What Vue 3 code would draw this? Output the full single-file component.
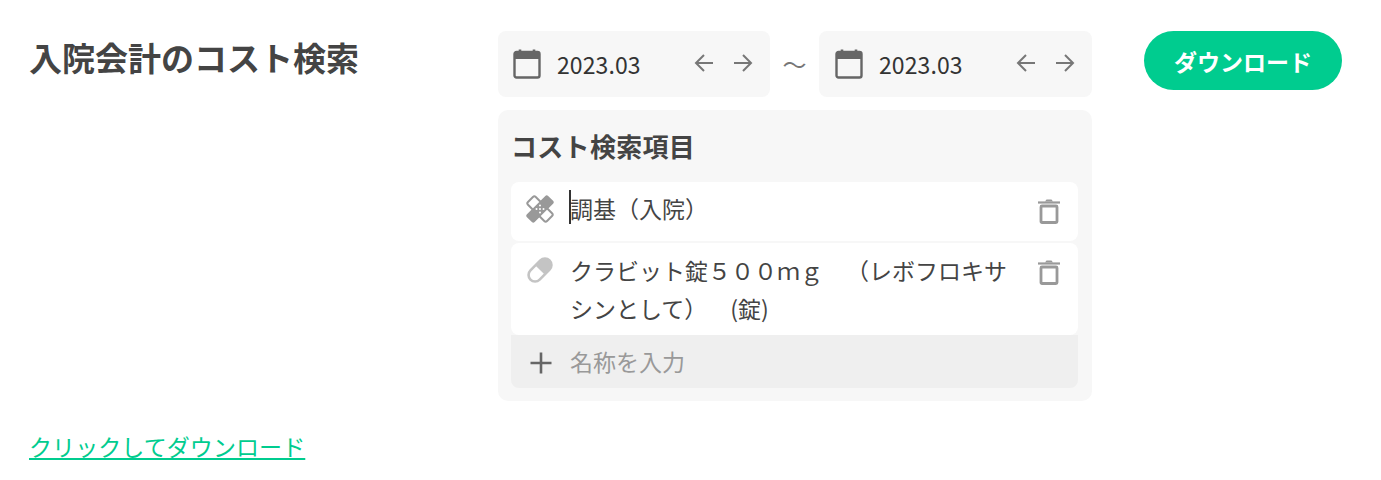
<template>
  <div class="page">
    <div class="top">
      <h1 class="title">入院会計のコスト検索</h1>
      <div class="center">
        <div class="dates">
          <div class="date" v-for="(d, i) in dates" :key="i">
            <svg class="cal" viewBox="0 0 28 32" width="28" height="32">
              <path d="M7 1.500v4M21 1.500v4" stroke="#666" stroke-width="2.600" fill="none" />
              <rect x="1.500" y="4" width="25" height="25.500" rx="2" fill="none" stroke="#666" stroke-width="2.400" />
              <rect x="1.500" y="4" width="25" height="7" fill="#666" />
            </svg>
            <span class="date-text">{{ d }}</span>
            <svg class="arrow" viewBox="0 0 20 20" width="20" height="20">
              <path d="M19 10H2M10 2 2 10l8 8" stroke="#777" stroke-width="2" fill="none" />
            </svg>
            <svg class="arrow" viewBox="0 0 20 20" width="20" height="20">
              <path d="M1 10H18M10 2 18 10l-8 8" stroke="#777" stroke-width="2" fill="none" />
            </svg>
          </div>
          <span class="tilde">～</span>
        </div>
        <div class="panel">
          <h2 class="panel-title">コスト検索項目</h2>
          <div class="row first">
            <svg class="row-icon" viewBox="0 0 28 28" width="28" height="28">
              <g transform="rotate(45 14 14)">
                <rect x="0.500" y="8.500" width="27" height="11" rx="2" fill="#fff" stroke="#999" stroke-width="2" />
              </g>
              <g transform="rotate(-45 14 14)">
                <rect x="-1" y="8.500" width="30" height="11" rx="2" fill="#999" />
              </g>
              <circle cx="14" cy="10.500" r="1" fill="#fff" />
              <circle cx="17.500" cy="14" r="1" fill="#fff" />
              <circle cx="14" cy="17.500" r="1" fill="#fff" />
              <circle cx="10.500" cy="14" r="1" fill="#fff" />
              <circle cx="14" cy="14" r="1" fill="#fff" />
            </svg>
            <div class="row-text"><span class="caret"></span>調基（入院）</div>
            <svg class="trash" viewBox="0 0 22 26" width="22" height="26">
              <path d="M0 4.500h22" stroke="#999" stroke-width="2.200" />
              <path d="M7 3.500 8.500 1.500h5L15 3.500z" fill="#999" />
              <rect x="3" y="8" width="16" height="16.500" rx="1" fill="none" stroke="#999" stroke-width="2.800" />
            </svg>
          </div>
          <div class="row">
            <svg class="row-icon" viewBox="0 0 28 28" width="28" height="28">
              <g transform="rotate(-45 14 14)">
                <rect x="0.500" y="7.500" width="27" height="13" rx="6.500" fill="#fff" stroke="#c4c4c4" stroke-width="2.600" />
                <path d="M14 7.500h7a6.500 6.500 0 0 1 0 13H14z" fill="#c4c4c4" />
              </g>
            </svg>
            <div class="row-text">クラビット錠５００ｍｇ　（レボフロキサシンとして）　(錠)</div>
            <svg class="trash" viewBox="0 0 22 26" width="22" height="26">
              <path d="M0 4.500h22" stroke="#999" stroke-width="2.200" />
              <path d="M7 3.500 8.500 1.500h5L15 3.500z" fill="#999" />
              <rect x="3" y="8" width="16" height="16.500" rx="1" fill="none" stroke="#999" stroke-width="2.800" />
            </svg>
          </div>
          <div class="add">
            <svg class="plus" viewBox="0 0 24 24" width="24" height="24">
              <path d="M12 1.500v21M1.500 12h21" stroke="#666" stroke-width="2.600" />
            </svg>
            <span class="add-text">名称を入力</span>
          </div>
        </div>
      </div>
      <button class="dl">ダウンロード</button>
    </div>
    <a class="link" href="#">クリックしてダウンロード</a>
  </div>
</template>

<script setup>
const dates = ['2023.03', '2023.03']
</script>

<style scoped>
.page {
  width: 1381px;
  height: 480px;
  box-sizing: border-box;
  padding: 31px 39px 0 29px;
  font-family: "Noto Sans CJK JP", "Noto Sans", sans-serif;
  color: #444;
  overflow: hidden;
}
.top {
  display: flex;
  align-items: flex-start;
}
.title {
  width: 469px;
  margin: -2px 0 2px;
  font-size: 33px;
  line-height: 56px;
  font-weight: 700;
  color: #444;
}
.center {
  width: 594px;
}
.dates {
  display: flex;
  position: relative;
  gap: 49px;
}
.date {
  flex: 1;
  height: 66px;
  box-sizing: border-box;
  padding: 0 17px 0 16px;
  background: #f7f7f7;
  border-radius: 8px;
  display: flex;
  align-items: center;
}
.date:first-child {
  flex: none;
  width: 272px;
  padding-left: 15px;
}
.tilde {
  position: absolute;
  left: 272px;
  width: 49px;
  top: 13px;
  text-align: center;
  font-size: 24px;
  line-height: 40px;
  color: #777;
}
.cal {
  flex: none;
}
.date-text {
  margin-left: 16px;
  font-size: 23px;
  line-height: 66px;
  flex: 1;
  color: #333;
  letter-spacing: 0.100px;
}
.arrow {
  margin-left: 19px;
  margin-top: -3px;
  flex: none;
}
.panel {
  margin-top: 13px;
  background: #f7f7f7;
  border-radius: 10px;
  padding: 14px 14px 13px 13px;
  height: 291px;
  box-sizing: border-box;
}
.panel-title {
  margin: 0 0 14px;
  font-size: 26px;
  line-height: 44px;
  font-weight: 700;
  letter-spacing: 0.300px;
  color: #444;
}
.row {
  background: #fff;
  border-radius: 8px;
  display: flex;
  align-items: flex-start;
  padding: 9px 18px 7px 15px;
  margin-bottom: 2px;
}
.row.first {
  height: 59px;
  box-sizing: border-box;
}
.row-icon {
  flex: none;
  margin-top: 4px;
}
.row-text {
  flex: 1;
  margin: -1px 0 1px 16px;
  font-size: 23px;
  line-height: 38px;
  color: #444;
  position: relative;
  text-spacing-trim: space-all;
}
.first .row-text {
  margin-top: -2px;
}
.caret {
  position: absolute;
  left: -1px;
  top: 1px;
  width: 2px;
  height: 34px;
  background: #333;
}
.trash {
  flex: none;
  margin-top: 7px;
  margin-left: 17px;
}
.add {
  height: 53px;
  margin-top: -2px;
  background: #efefef;
  border-radius: 0 0 8px 8px;
  display: flex;
  align-items: center;
  padding-left: 18px;
  font-size: 23px;
  color: #999;
}
.plus {
  margin-right: 17px;
  margin-top: 2px;
  flex: none;
}
.add-text {
  margin-top: -2px;
}
.dl {
  margin-left: 52px;
  width: 198px;
  height: 59px;
  border: none;
  border-radius: 30px;
  background: #00cc8f;
  color: #fff;
  font-family: inherit;
  font-weight: 700;
  font-size: 23px;
}
.link {
  display: inline-block;
  margin-top: 28px;
  font-size: 23px;
  line-height: 34px;
  letter-spacing: 0.080px;
  color: #00cc8f;
  text-decoration: underline;
}
</style>
